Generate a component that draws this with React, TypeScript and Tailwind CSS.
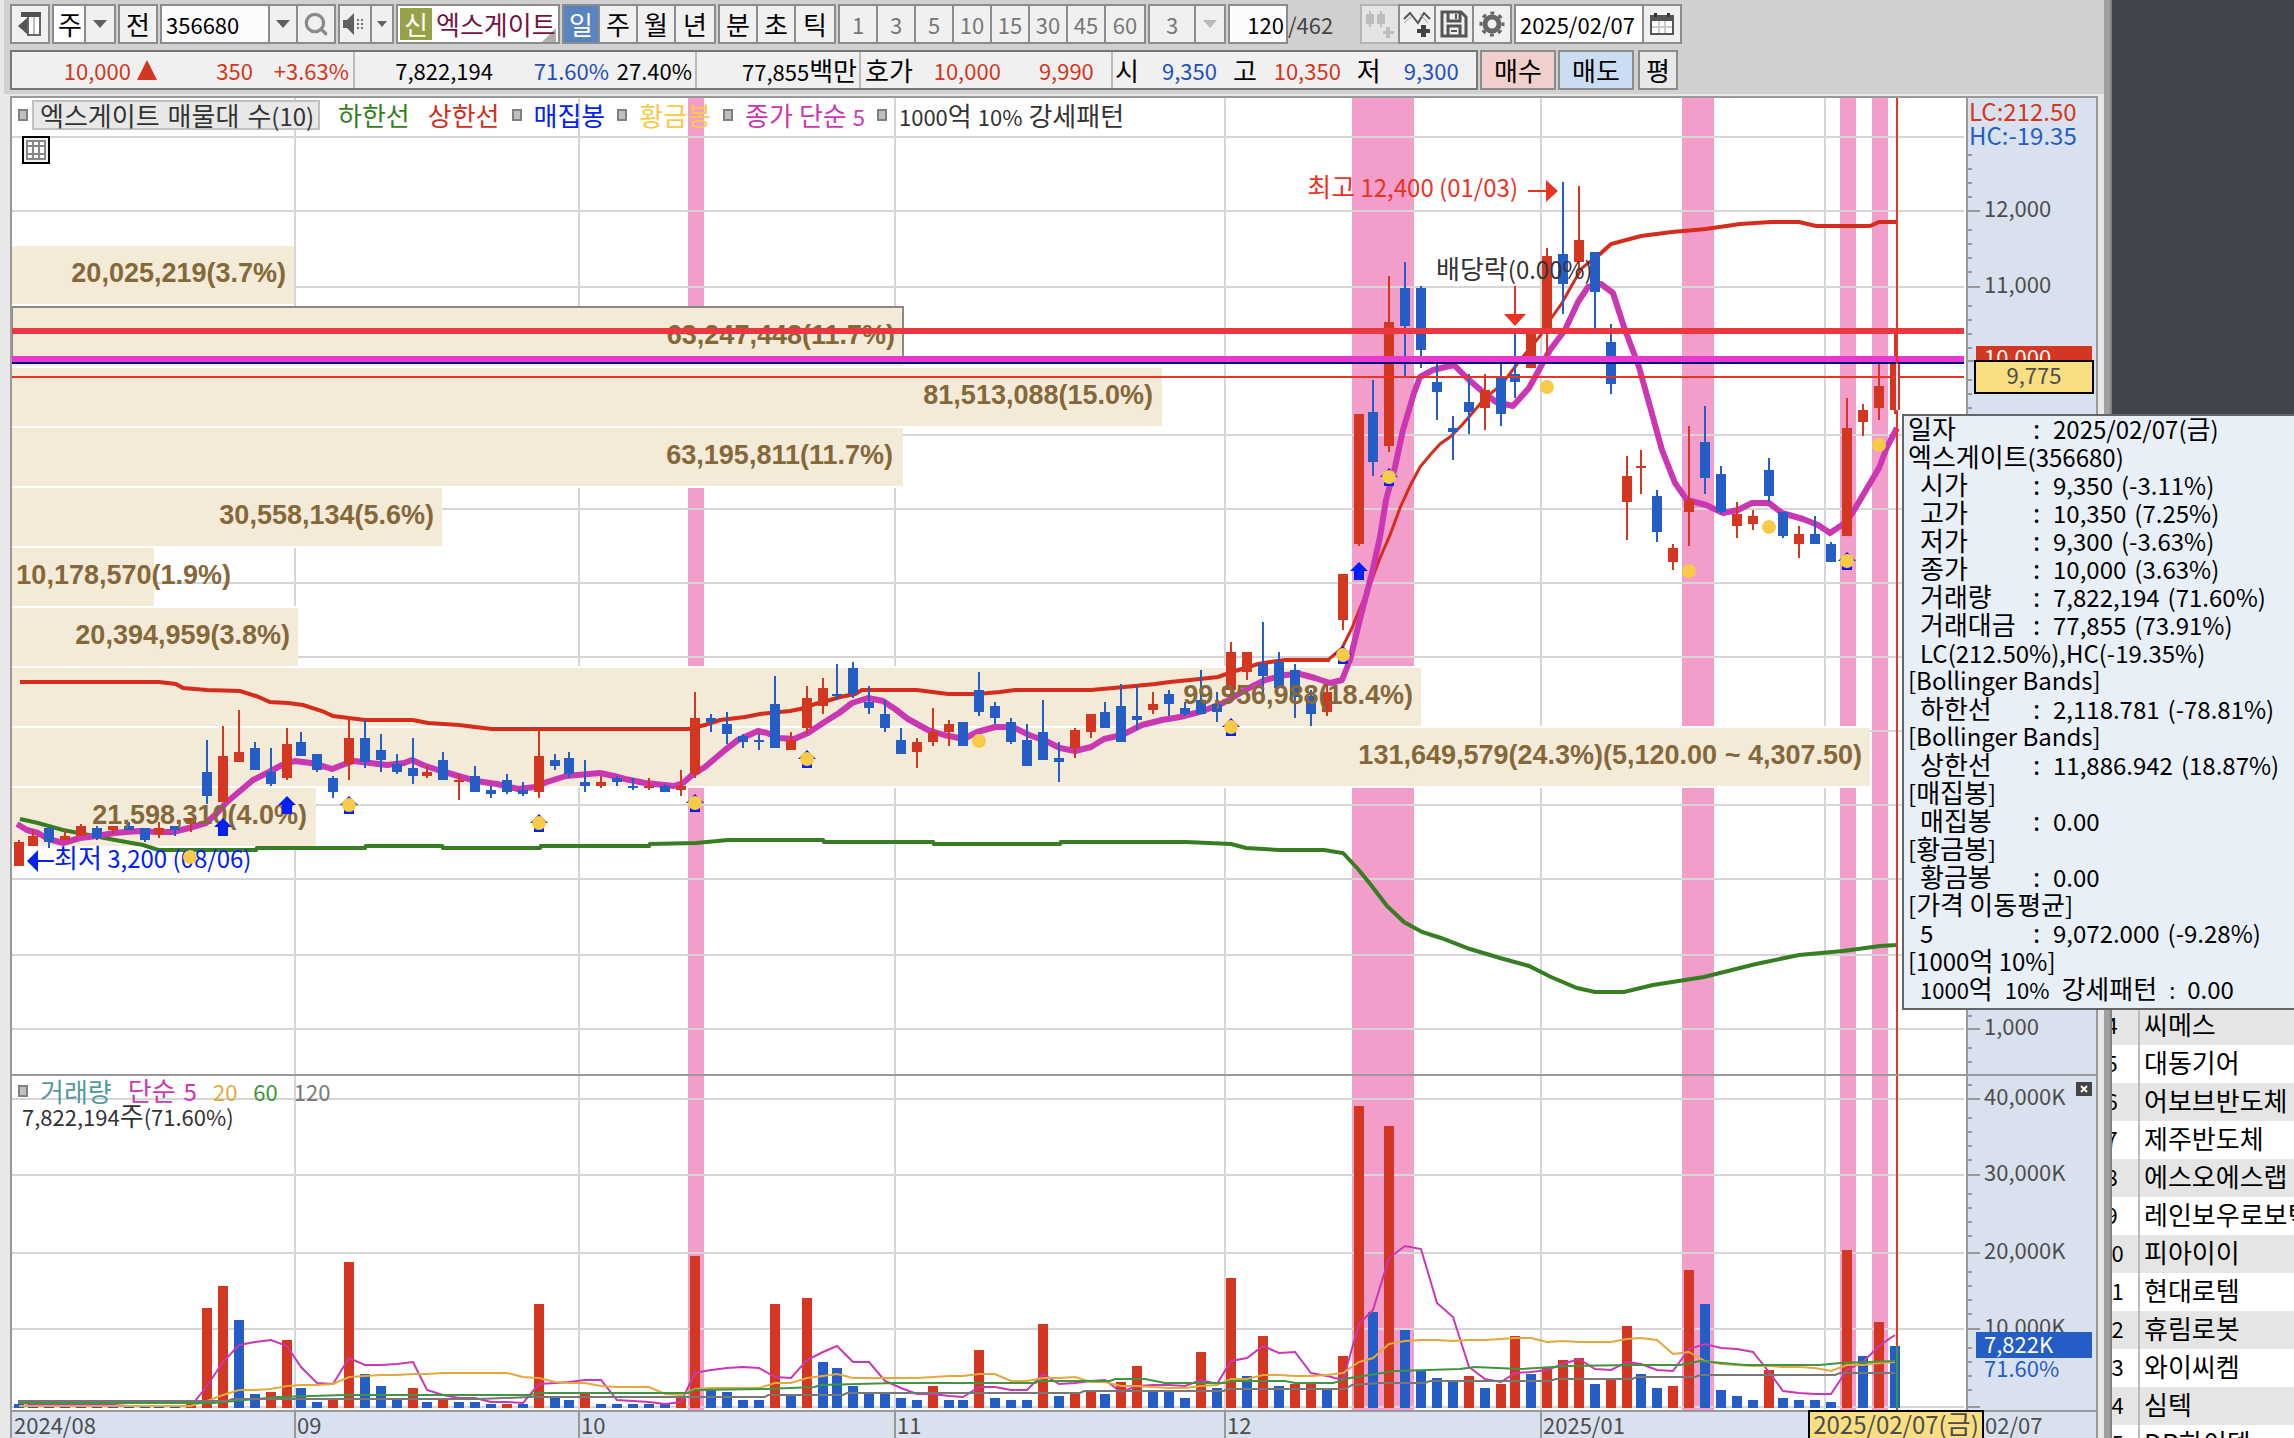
import type { ReactNode } from 'react';
import { Search } from 'lucide-react';

const RED = '#d33621';
const BLUE = '#245dc5';
const PURPLE = '#cb37b3';

// [up, high, bodyTop, bodyBottom, low, volumeUp, volumeTop]
type Bar = [number, number, number, number, number, number, number];

const BARS: Bar[] = [
    [1, 840, 842, 866, 866, 0, 1404], [1, 830, 836, 846, 846, 0, 1404], [0, 828, 828, 842, 848, 0, 1404],
    [1, 830, 836, 840, 840, 0, 1404], [1, 824, 826, 836, 836, 0, 1406], [0, 826, 828, 838, 840, 0, 1406],
    [1, 826, 826, 830, 834, 0, 1406], [0, 822, 826, 830, 830, 0, 1406], [0, 828, 828, 840, 842, 0, 1406],
    [1, 822, 828, 834, 838, 0, 1406], [0, 826, 826, 830, 836, 0, 1406], [1, 818, 818, 824, 832, 1, 1404],
    [0, 740, 772, 796, 804, 1, 1308], [1, 726, 756, 802, 802, 1, 1286], [1, 710, 752, 762, 762, 0, 1320],
    [0, 742, 748, 770, 770, 0, 1394], [0, 748, 772, 784, 786, 1, 1392], [1, 728, 744, 778, 780, 1, 1340],
    [0, 732, 742, 756, 756, 0, 1388], [0, 754, 754, 770, 772, 0, 1402], [0, 776, 778, 792, 798, 1, 1400],
    [1, 718, 738, 764, 780, 1, 1262], [0, 720, 738, 762, 768, 0, 1374], [0, 734, 750, 760, 772, 0, 1386],
    [0, 754, 764, 772, 774, 0, 1400], [0, 738, 768, 776, 784, 1, 1388], [1, 766, 772, 776, 778, 0, 1402],
    [0, 752, 760, 780, 780, 1, 1398], [1, 774, 780, 782, 800, 0, 1402], [0, 766, 776, 792, 792, 0, 1402],
    [0, 786, 790, 794, 798, 0, 1404], [0, 774, 780, 792, 794, 1, 1404], [0, 782, 790, 794, 796, 0, 1404],
    [1, 730, 756, 792, 798, 1, 1304], [0, 754, 760, 766, 770, 0, 1398], [0, 752, 758, 774, 778, 0, 1400],
    [0, 760, 782, 786, 792, 1, 1394], [1, 776, 782, 786, 788, 0, 1404], [0, 776, 778, 782, 786, 0, 1404],
    [0, 778, 786, 788, 790, 0, 1404], [1, 778, 786, 788, 790, 0, 1404], [0, 784, 786, 792, 792, 0, 1404],
    [1, 770, 786, 790, 796, 1, 1396], [1, 692, 718, 774, 778, 1, 1256], [0, 714, 718, 722, 732, 0, 1390],
    [0, 712, 724, 734, 744, 0, 1392], [0, 734, 736, 742, 748, 0, 1400], [0, 734, 740, 742, 750, 0, 1400],
    [0, 676, 704, 748, 748, 1, 1304], [1, 732, 740, 750, 750, 0, 1396], [1, 686, 698, 728, 734, 1, 1298],
    [1, 678, 688, 706, 714, 0, 1362], [0, 664, 694, 696, 700, 0, 1368], [0, 662, 668, 694, 698, 0, 1386],
    [0, 686, 702, 708, 714, 0, 1394], [0, 700, 714, 728, 732, 0, 1394], [0, 728, 740, 754, 754, 0, 1398],
    [1, 738, 742, 752, 768, 0, 1400], [1, 708, 732, 742, 746, 1, 1386], [1, 720, 724, 732, 746, 0, 1400],
    [0, 722, 722, 746, 746, 0, 1400], [0, 672, 690, 712, 716, 1, 1350], [0, 702, 706, 718, 724, 0, 1398],
    [0, 718, 722, 742, 744, 0, 1400], [0, 724, 740, 766, 766, 0, 1400], [0, 700, 732, 760, 760, 1, 1324],
    [0, 742, 758, 762, 782, 0, 1396], [1, 728, 730, 748, 758, 1, 1394], [1, 714, 714, 732, 738, 1, 1392],
    [0, 702, 712, 728, 728, 0, 1394], [0, 684, 706, 742, 742, 1, 1382], [0, 686, 716, 720, 730, 1, 1366],
    [1, 692, 704, 710, 714, 0, 1391], [0, 690, 694, 704, 716, 0, 1391], [0, 702, 708, 714, 716, 0, 1398],
    [0, 670, 700, 714, 714, 1, 1352], [0, 692, 704, 712, 722, 0, 1388], [1, 642, 652, 690, 702, 1, 1278],
    [1, 652, 652, 672, 680, 0, 1376], [0, 622, 664, 676, 694, 1, 1336], [0, 652, 662, 688, 688, 0, 1386],
    [0, 664, 670, 697, 718, 1, 1384], [0, 690, 696, 714, 726, 1, 1384], [1, 684, 692, 712, 716, 0, 1390],
    [1, 574, 574, 620, 630, 1, 1356], [1, 414, 414, 544, 546, 1, 1106], [0, 380, 412, 462, 476, 0, 1312],
    [1, 276, 322, 446, 452, 1, 1126], [0, 262, 288, 326, 377, 0, 1330], [0, 286, 288, 350, 368, 0, 1370],
    [0, 364, 382, 392, 420, 0, 1378], [0, 416, 428, 432, 460, 0, 1382], [0, 374, 402, 412, 434, 1, 1376],
    [1, 374, 390, 408, 430, 0, 1388], [0, 364, 378, 414, 426, 1, 1384], [0, 334, 374, 382, 398, 1, 1336],
    [1, 334, 334, 368, 368, 0, 1374], [1, 248, 256, 328, 356, 1, 1368], [0, 182, 254, 284, 314, 1, 1360],
    [1, 186, 240, 262, 272, 1, 1358], [0, 252, 252, 292, 328, 0, 1384], [0, 324, 342, 384, 394, 1, 1380],
    [1, 456, 476, 502, 540, 1, 1326], [1, 450, 466, 468, 494, 0, 1374], [0, 490, 496, 532, 542, 0, 1388],
    [1, 544, 548, 562, 570, 1, 1386], [1, 426, 500, 512, 546, 1, 1270], [0, 406, 442, 478, 494, 0, 1304],
    [0, 466, 474, 512, 514, 0, 1390], [1, 502, 514, 526, 538, 0, 1396], [1, 510, 516, 524, 530, 0, 1400],
    [0, 458, 470, 496, 502, 1, 1370], [0, 512, 512, 536, 538, 0, 1398], [1, 526, 534, 544, 558, 0, 1400],
    [0, 516, 534, 544, 544, 0, 1400], [0, 542, 544, 562, 562, 0, 1402], [1, 398, 428, 536, 536, 1, 1250],
    [1, 404, 410, 422, 436, 0, 1356], [1, 364, 386, 408, 420, 1, 1322], [1, 330, 363, 410, 414, 0, 1346],
];

const PROFILE = [
    { top: 246, right: 294, text: '20,025,219(3.7%)', end: 286 },
    { top: 308, right: 903, text: '63,247,448(11.7%)', end: 895 },
    { top: 368, right: 1162, text: '81,513,088(15.0%)', end: 1153 },
    { top: 428, right: 903, text: '63,195,811(11.7%)', end: 893 },
    { top: 488, right: 442, text: '30,558,134(5.6%)', end: 434 },
    { top: 548, right: 154, text: '10,178,570(1.9%)', end: 231 },
    { top: 608, right: 298, text: '20,394,959(3.8%)', end: 290 },
    { top: 668, right: 1421, text: '99,956,988(18.4%)', end: 1413 },
    { top: 728, right: 1870, text: '131,649,579(24.3%)(5,120.00 ~ 4,307.50)', end: 1862 },
    { top: 788, right: 316, text: '21,598,310(4.0%)', end: 307 },
];

const ZONES = [[688, 16], [1352, 62], [1682, 32], [1840, 16], [1872, 16]];
const MONTHS = [
    { x: 295, label: '09' },
    { x: 579, label: '10' },
    { x: 895, label: '11' },
    { x: 1225, label: '12' },
    { x: 1541, label: '2025/01' },
    { x: 1825, label: '' },
];
const PRICE_GRID = [137, 211, 287, 361, 435, 509, 583, 657, 731, 805, 879, 955, 1029];
const VOLUME_GRID = [1099, 1175, 1253, 1329, 1407];

const UPPER_LEFT =
    '20,682 159,682 176,684 183,688 207,690 240,691 256,696 270,702 288,703 303,705 322,711 333,716 349,718 365,720 413,720 428,723 459,725 475,727 492,729 688,729 705,725 720,720 745,717 760,714 790,711 805,708 815,704 830,700 840,697 855,694 862,690 917,690 948,694 977,694 1000,692 1015,690 1091,690 1135,686 1155,684 1170,682 1190,680 1218,677 1232,672 1245,668 1258,664 1270,662 1285,660 1330,660';
const UPPER_MID =
    '1328,660 1342,648 1352,628 1360,608 1370,585 1380,558 1390,535 1400,508 1410,486 1420,467 1430,455 1440,444 1450,437 1462,425 1475,410 1485,398 1495,390 1505,380 1518,363 1530,348 1540,336 1550,320 1562,303 1572,285 1582,268 1592,260 1602,253';
const UPPER_RIGHT =
    '1600,254 1611,244 1641,236 1672,232 1706,229 1740,224 1771,222 1799,222 1816,226 1870,226 1879,222 1897,222';
const LOWER =
    '20,819 38,823 63,830 99,837 126,842 143,845 158,850 256,850 257,848 365,848 366,846 442,846 443,848 540,848 541,846 649,846 650,844 696,843 728,840 823,840 824,842 933,842 934,844 1060,844 1061,842 1186,842 1231,844 1246,848 1279,850 1324,850 1343,853 1358,869 1371,885 1387,906 1404,922 1422,932 1441,938 1470,949 1500,958 1529,966 1551,977 1577,988 1595,992 1624,992 1653,985 1704,977 1756,964 1799,955 1843,951 1880,946 1897,945';
const MA5 =
    '17,824 27,830 38,833 48,839 63,843 80,838 97,836 114,833 139,831 156,832 173,832 189,828 206,823 217,813 227,802 240,791 253,780 269,772 282,765 295,761 311,763 326,767 332,769 345,764 354,761 370,763 387,765 404,763 412,760 423,765 438,770 455,775 476,781 497,784 518,789 535,787 547,782 566,776 589,774 600,773 614,776 625,779 645,783 674,786 683,783 692,775 705,767 725,750 738,740 758,731 767,733 779,738 794,739 808,733 823,723 839,713 852,703 868,698 883,701 895,709 908,719 928,730 944,735 964,739 977,732 995,727 1013,727 1029,735 1046,741 1060,748 1075,751 1091,747 1104,739 1122,735 1142,725 1162,720 1180,717 1203,711 1223,703 1232,698 1247,689 1265,680 1285,675 1300,674 1315,678 1330,683 1342,680 1350,660 1361,615 1372,573 1380,537 1386,500 1395,467 1403,430 1414,393 1420,377 1433,370 1454,365 1468,379 1483,392 1496,402 1513,406 1529,388 1540,368 1550,350 1565,330 1578,302 1588,287 1601,284 1613,293 1624,327 1639,367 1649,403 1662,450 1675,483 1687,500 1706,505 1723,513 1738,510 1752,503 1769,503 1782,513 1803,519 1818,525 1830,533 1845,523 1853,512 1866,490 1879,468 1887,447 1897,428';
const VOL_MA60 =
    '18,1403 213,1403 278,1397 345,1395 530,1395 540,1393 688,1393 695,1390 765,1389 815,1387 820,1385 895,1383 1035,1383 1040,1381 1110,1381 1115,1379 1145,1379 1165,1383 1225,1383 1230,1381 1285,1381 1295,1383 1333,1383 1350,1378 1395,1371 1460,1369 1475,1367 1520,1369 1570,1366 1630,1365 1680,1365 1700,1361 1745,1365 1820,1365 1840,1363 1895,1361';
const VOL_MA120 =
    '18,1401 228,1401 232,1399 480,1399 530,1397 765,1397 768,1395 843,1395 847,1393 1080,1393 1084,1391 1224,1391 1228,1389 1345,1389 1352,1385 1380,1383 1425,1383 1430,1381 1550,1381 1556,1379 1632,1379 1637,1377 1695,1377 1700,1375 1835,1375 1840,1373 1895,1373';

const GOLD_WITH_ARROW = [[349, 805], [539, 823], [695, 803], [807, 759], [1231, 727], [1343, 655], [1389, 477], [1847, 561]];
const GOLD_ONLY = [[190, 857], [979, 741], [1547, 387], [1689, 571], [1769, 527], [1879, 445]];
const ARROWS = [[287, 805], [223, 827], [1359, 571]];

const barX = (i: number) => 14 + 2 * Math.floor(i * 7.883);

const movingAverage = (days: number) =>
    BARS.map((_, i) => {
        let sum = 0;
        for (let k = i - days + 1; k <= i; k++) {
            sum += k < 0 ? 1406 : BARS[k][6];
        }
        return `${barX(i) + 5},${Math.round(sum / days)}`;
    }).join(' ');

const STOCKS = [
    ['4', '씨메스'], ['5', '대동기어'], ['6', '어보브반도체'], ['7', '제주반도체'], ['8', '에스오에스랩'],
    ['9', '레인보우로보틱스'], ['10', '피아이이'], ['11', '현대로템'], ['12', '휴림로봇'], ['13', '와이씨켐'],
    ['14', '심텍'], ['15', 'DB하이텍'],
];

const DETAILS: { head?: string; label?: string; value?: string; rate?: string }[] = [
    { label: '시가', value: '9,350', rate: '(-3.11%)' },
    { label: '고가', value: '10,350', rate: '(7.25%)' },
    { label: '저가', value: '9,300', rate: '(-3.63%)' },
    { label: '종가', value: '10,000', rate: '(3.63%)' },
    { label: '거래량', value: '7,822,194', rate: '(71.60%)' },
    { label: '거래대금', value: '77,855', rate: '(73.91%)' },
    { label: 'LC(212.50%),HC(-19.35%)' },
    { head: '[Bollinger Bands]' },
    { label: '하한선', value: '2,118.781', rate: '(-78.81%)' },
    { head: '[Bollinger Bands]' },
    { label: '상한선', value: '11,886.942', rate: '(18.87%)' },
    { head: '[매집봉]' },
    { label: '매집봉', value: '0.00' },
    { head: '[황금봉]' },
    { label: '황금봉', value: '0.00' },
    { head: '[가격 이동평균]' },
    { label: '5', value: '9,072.000', rate: '(-9.28%)' },
    { head: '[1000억 10%]' },
];

// Hangul runs are set larger than the digits and Latin beside them
const splitRuns = (text: string) => text.match(/[가-힣]+|[^가-힣]+/g) ?? [];
const isHangul = (run: string) => /[가-힣]/.test(run);

function Mixed({ text, size = 'text-[22px]' }: { text: string; size?: string }) {
    return (
        <span className={`whitespace-pre ${size}`}>
            {splitRuns(text).map((run, i) => (isHangul(run) ? <span key={i} className="text-[26px]">{run}</span> : run))}
        </span>
    );
}

function SvgMixed({ text, size = 24 }: { text: string; size?: number }) {
    return (
        <>
            {splitRuns(text).map((run, i) => (
                <tspan key={i} fontSize={isHangul(run) ? 26 : size}>
                    {run}
                </tspan>
            ))}
        </>
    );
}

function Group({ children, className = '' }: { children: ReactNode; className?: string }) {
    return (
        <div className={`flex h-10 shrink-0 divide-x-2 divide-[#8c8c8c] border-2 border-[#8c8c8c] bg-[#f0f0f0] ${className}`}>
            {children}
        </div>
    );
}

function ToolButton({ children, label, className = 'w-[38px]' }: { children: ReactNode; label?: string; className?: string }) {
    return (
        <button type="button" aria-label={label} className={`flex shrink-0 items-center justify-center ${className}`}>
            {children}
        </button>
    );
}

function Caret({ color = '#606060' }: { color?: string }) {
    return (
        <svg width="14" height="8" viewBox="0 0 14 8">
            <path d="M0 0H14L7 8Z" fill={color} />
        </svg>
    );
}

function Toolbar() {
    return (
        <div className="flex gap-0.5 whitespace-nowrap leading-9">
            <Group>
                <ToolButton label="패널 접기" className="w-9">
                    <svg width="24" height="26" viewBox="0 0 24 26">
                        <path d="M3 1H23V25H9V20H3Z" fill="#666" />
                        <path d="M3 6H21V23H11V20H3Z" fill="#fff" />
                        <path d="M15 6H17V23H15Z" fill="#bbb" />
                        <path d="M3 1H23V6H3Z" fill="#505050" />
                        <path d="M9 7V23L0 15Z" fill="#555" />
                        <path d="M9 6H11V23H9ZM21 6H23V25H21Z" fill="#666" />
                    </svg>
                </ToolButton>
            </Group>
            <Group className="bg-white">
                <select aria-label="시장" className="w-8 appearance-none bg-white pl-1">
                    <option>주</option>
                </select>
                <ToolButton label="시장 선택" className="w-7 bg-[#f0f0f0]">
                    <Caret />
                </ToolButton>
            </Group>
            <Group>
                <ToolButton className="w-9">전</ToolButton>
            </Group>
            <Group>
                <input aria-label="종목코드" defaultValue="356680" className="w-[108px] bg-[#fcfcff] pl-1 text-[22px]" />
                <ToolButton label="최근 종목" className="w-7">
                    <Caret />
                </ToolButton>
                <ToolButton label="종목 검색" className="w-9">
                    <Search size={26} strokeWidth={3} color="#8a8a8a" />
                </ToolButton>
            </Group>
            <Group>
                <ToolButton label="소리" className="w-8">
                    <svg width="26" height="24" viewBox="0 0 26 24">
                        <path d="M1 8H5L12 1V23L5 16H1Z" fill="#606060" />
                        <path d="M15 7H17V9H15ZM15 11H17V13H15ZM15 15H17V17H15ZM19 7H21V9H19ZM19 11H21V13H19ZM19 15H21V17H19Z" fill="#777" />
                    </svg>
                </ToolButton>
                <ToolButton label="소리 선택" className="w-5">
                    <svg width="10" height="6" viewBox="0 0 10 6">
                        <path d="M0 0H10L5 6Z" fill="#606060" />
                    </svg>
                </ToolButton>
            </Group>
            <div className="relative flex h-10 w-[164px] shrink-0 items-center gap-1 overflow-hidden border-2 border-[#8c8c8c] bg-white pl-0.5">
                <svg width="14" height="14" viewBox="0 0 14 14" className="absolute bottom-0 right-0.5">
                    <path d="M14 0V14H0Z" fill="#b0b0b0" />
                </svg>
                <span className="flex h-8 w-8 shrink-0 items-center justify-center bg-[#99a148] text-white">신</span>
                <span className="relative text-[#76123f]">엑스게이트</span>
            </div>
            <Group>
                <ToolButton className="w-9 bg-[#5a84c0] text-white">일</ToolButton>
                <ToolButton>주</ToolButton>
                <ToolButton>월</ToolButton>
                <ToolButton>년</ToolButton>
            </Group>
            <Group>
                <ToolButton>분</ToolButton>
                <ToolButton>초</ToolButton>
                <ToolButton>틱</ToolButton>
            </Group>
            <Group className="text-[22px] text-[#777]">
                {['1', '3', '5', '10', '15', '30', '45', '60'].map((n) => (
                    <ToolButton key={n}>{n}</ToolButton>
                ))}
            </Group>
            <Group className="text-[22px] text-[#777]">
                <select aria-label="분 간격" disabled className="w-[46px] appearance-none pl-4">
                    <option>3</option>
                </select>
                <ToolButton label="간격 선택" className="w-7">
                    <Caret color="#b8b8b8" />
                </ToolButton>
            </Group>
            <div className="flex shrink-0 items-center text-[22px]">
                <input aria-label="봉 개수" defaultValue="120" className="h-10 w-[60px] border-2 border-[#8c8c8c] bg-[#fcfcff] pr-0.5 text-right" />
                <span className="w-[70px] text-[#444]">/462</span>
            </div>
            <div className="flex shrink-0">
                <button type="button" aria-label="봉 추가" disabled className="flex h-10 w-[38px] items-center justify-center border-2 border-r-0 border-[#b4b4b4] bg-[#e4e4e4]">
                    <svg width="28" height="28" viewBox="0 0 28 28" fill="#bdbdbd">
                        <path d="M3 1H5V4H8V14H5V17H3V14H0V4H3ZM14 1H16V4H19V14H16V17H14V14H11V4H14ZM20 17H24V21H28V24H24V28H20V24H17V21H20Z" />
                    </svg>
                </button>
                <Group>
                    <ToolButton label="지표 추가" className="w-9">
                        <svg width="28" height="28" viewBox="0 0 28 28">
                            <path d="M1 9L7 3L15 13L21 3L27 9" fill="none" stroke="#555" strokeWidth="2" />
                            <path d="M1 13L8 7M17 4L25 13" fill="none" stroke="#999" strokeWidth="1" />
                            <path d="M18 15H23V19H27V23H23V27H18V23H14V19H18Z" fill="#444" />
                        </svg>
                    </ToolButton>
                    <ToolButton label="저장">
                        <svg width="28" height="28" viewBox="0 0 28 28" fill="none" stroke="#555" strokeWidth="3">
                            <path d="M2 2H21L26 7V26H2Z" />
                            <path d="M8 2V11H20V2M8 26V16H20V26" />
                            <path d="M16 4V9M11 21H17" strokeWidth="2" />
                        </svg>
                    </ToolButton>
                    <ToolButton label="설정" className="w-9">
                        <svg width="26" height="26" viewBox="0 0 26 26" fill="none" stroke="#666">
                            <circle cx="13" cy="13" r="7" strokeWidth="5" />
                            <circle cx="13" cy="13" r="11" strokeWidth="3" strokeDasharray="4 4.64" strokeDashoffset="2" />
                        </svg>
                    </ToolButton>
                </Group>
            </div>
            <Group>
                <input aria-label="기준일" defaultValue="2025/02/07" className="w-[128px] bg-white pl-1 text-[22px]" />
                <ToolButton label="달력" className="w-9">
                    <svg width="24" height="22" viewBox="0 0 24 22">
                        <path d="M0 2H24V22H0Z" fill="#555" />
                        <path d="M2 8H22V20H2Z" fill="#fff" />
                        <path d="M8 8H10V20H8ZM14 8H16V20H14ZM2 13H22V15H2Z" fill="#ccc" />
                        <path d="M4 0H7V4H4ZM17 0H20V4H17Z" fill="#333" />
                    </svg>
                </ToolButton>
            </Group>
        </div>
    );
}

function QuoteBar() {
    return (
        <div className="flex gap-0.5 whitespace-nowrap leading-9">
            <div className="flex h-10 shrink-0 divide-x-2 divide-[#bbb] border-2 border-[#777] bg-[#f0f0f0] text-[22px]">
                <div className="flex w-[343px] items-center text-[#d33621]">
                    <span className="w-[119px] text-right">10,000</span>
                    <svg width="20" height="20" viewBox="0 0 20 20" className="ml-1.5">
                        <path d="M10 0L20 20H0Z" fill={RED} />
                    </svg>
                    <span className="w-24 text-right">350</span>
                    <span className="w-24 text-right">+3.63%</span>
                </div>
                <div className="flex w-[342px] items-center">
                    <span className="w-[138px] text-right">7,822,194</span>
                    <span className="w-[116px] text-right text-[#1f4fbd]">71.60%</span>
                    <span className="w-[83px] text-right">27.40%</span>
                </div>
                <div className="flex w-[164px] items-center justify-end pr-0.5">
                    <Mixed text="77,855백만" />
                </div>
                <div className="flex w-[252px] items-center pl-1">
                    <span className="text-[26px]">호가</span>
                    <span className="w-[88px] text-right text-[#d33621]">10,000</span>
                    <span className="w-[93px] text-right text-[#d33621]">9,990</span>
                </div>
                <div className="flex w-[363px] items-center gap-1 pl-0.5">
                    <span className="text-[26px]">시</span>
                    <span className="w-[74px] text-right text-[#1f4fbd]">9,350</span>
                    <span className="ml-3 text-[26px]">고</span>
                    <span className="w-20 text-right text-[#d33621]">10,350</span>
                    <span className="ml-3 text-[26px]">저</span>
                    <span className="w-[74px] text-right text-[#1f4fbd]">9,300</span>
                </div>
            </div>
            <button type="button" className="h-10 w-[76px] shrink-0 border-2 border-[#8c8c8c] bg-[#f0d0cc]">매수</button>
            <button type="button" className="h-10 w-[76px] shrink-0 border-2 border-[#8c8c8c] bg-[#cbddf2]">매도</button>
            <button type="button" className="ml-0.5 h-10 w-10 shrink-0 border-2 border-[#8c8c8c] bg-[#e8e8e8]">평</button>
        </div>
    );
}

function Square() {
    return <span className="h-3 w-2.5 shrink-0 border-2 border-[#808080] bg-[#c0c0c0]" />;
}

function UpArrow({ x, y }: { x: number; y: number }) {
    return <path d={`M${x} ${y - 9}L${x + 9} ${y}H${x + 5}V${y + 9}H${x - 5}V${y}H${x - 9}Z`} fill="#0020f5" />;
}

function Ticks({ grid, min, max }: { grid: number[]; min: number; max: number }) {
    return (
        <g fill="#999">
            {grid.map((y) => (
                <g key={y}>
                    <rect x="1968" y={y - 1} width="12" height="2" />
                    {[19, 33, 47, 61]
                        .filter((d) => y + d > min && y + d < max)
                        .map((d) => (
                            <rect key={d} x="1968" y={y + d - 1} width="4" height="2" />
                        ))}
                </g>
            ))}
        </g>
    );
}

function PriceChart() {
    return (
        <svg viewBox="12 98 2084 976" className="block w-full" fontSize="22">
            <rect x="12" y="98" width="2084" height="976" fill="#fff" />
            {ZONES.map(([x, w]) => (
                <rect key={x} x={x} y="98" width={w} height="976" fill="#f29dca" />
            ))}
            <g fill="#d6d6d6">
                {PRICE_GRID.map((y) => (
                    <rect key={y} x="12" y={y - 1} width="1952" height="2" />
                ))}
                {MONTHS.map((m) => (
                    <rect key={m.x} x={m.x - 1} y="98" width="2" height="976" />
                ))}
            </g>
            {PROFILE.map((p) => (
                <g key={p.top}>
                    <rect x="12" y={p.top - 2} width={p.right - 12} height="62" fill="#fff" />
                    <rect x="12" y={p.top} width={p.right - 12} height="58" fill="#f4ead8" />
                </g>
            ))}
            <rect x="12" y="307" width="891" height="54" fill="none" stroke="#8a8a80" strokeWidth="2" />

            <polyline points={UPPER_LEFT} fill="none" stroke="#d62c1c" strokeWidth="4" />
            <polyline points={UPPER_MID} fill="none" stroke="#d62c1c" strokeWidth="3" />
            <polyline points={UPPER_RIGHT} fill="none" stroke="#d62c1c" strokeWidth="4" />
            <polyline points={LOWER} fill="none" stroke="#377d22" strokeWidth="4" />
            <polyline points={MA5} fill="none" stroke={PURPLE} strokeWidth="6" strokeLinejoin="round" />

            <g shapeRendering="crispEdges">
                {BARS.map(([up, high, top, bottom, low], i) => (
                    <g key={i} fill={up ? RED : BLUE}>
                        <rect x={barX(i) + 4} y={high} width="2" height={low - high} />
                        <rect x={barX(i)} y={top} width="10" height={bottom - top} />
                    </g>
                ))}
            </g>

            <g fill="#85683a" fontWeight="700" fontSize="27" textAnchor="end" className="font-['Liberation_Sans',sans-serif]">
                {PROFILE.map((p) => (
                    <text key={p.top} x={p.end} y={p.top + 36}>
                        {p.text}
                    </text>
                ))}
            </g>

            <text x="54" y="868" fill="#0020f5">
                <SvgMixed text="최저 3,200 (08/06)" />
            </text>
            <path d="M27 861L38 850V860H54V862H38V872Z" fill="#0020f5" />
            <text x="1518" y="197" textAnchor="end" fill="#eb3323">
                <SvgMixed text="최고 12,400 (01/03)" />
            </text>
            <path d="M1558 191L1546 180V190H1528V192H1546V202Z" fill="#eb3323" />
            <text x="1436" y="279" fill="#333">
                <SvgMixed text="배당락(0.00%)" />
            </text>
            <path d="M1514 286H1516V314H1526L1515 326L1504 314H1514Z" fill="#eb3323" />

            {ARROWS.map(([x, y]) => (
                <UpArrow key={x} x={x} y={y} />
            ))}
            {GOLD_WITH_ARROW.map(([x, y]) => (
                <g key={x}>
                    <UpArrow x={x} y={y} />
                    <ellipse cx={x} cy={y} rx="7" ry="7" fill="#f7ca48" />
                </g>
            ))}
            {GOLD_ONLY.map(([x, y]) => (
                <ellipse key={x} cx={x} cy={y} rx="7" ry="7" fill="#f7ca48" />
            ))}

            <rect x="12" y="328" width="1952" height="6" fill="#ec3741" />
            <rect x="12" y="356" width="1952" height="6" fill="#e838d0" />
            <rect x="12" y="362" width="1952" height="2" fill="#000080" />
            <rect x="12" y="376" width="1952" height="2" fill="#e93323" />
            <rect x="1894" y="334" width="2" height="22" fill={RED} />
            <rect x="1896" y="98" width="2" height="976" fill="#e93323" />
            <rect x="1896" y="364" width="2" height="46" fill="#dfe6f4" />

            <rect x="1966" y="98" width="130" height="976" fill="#d8e1ed" />
            <rect x="1966" y="98" width="2" height="976" fill="#999" />
            <Ticks grid={PRICE_GRID.slice(1)} min={212} max={1070} />
            <g fill="#999">
                {[155, 169, 183, 197].map((y) => (
                    <rect key={y} x="1968" y={y - 1} width="4" height="2" />
                ))}
            </g>
            <g fill="#4d4d4d">
                <text x="1984" y="217">12,000</text>
                <text x="1984" y="293">11,000</text>
                <text x="1984" y="1035">1,000</text>
            </g>
            <text x="1969" y="121" fontSize="24" fill={RED}>LC:212.50</text>
            <text x="1969" y="145" fontSize="24" fill={BLUE}>HC:-19.35</text>
            <rect x="1976" y="346" width="116" height="26" fill={RED} />
            <text x="1984" y="366" fill="#fff">10,000</text>
            <rect x="1975" y="361" width="118" height="32" fill="#fade82" stroke="#000" strokeWidth="2" />
            <text x="2034" y="384" fill="#4d4d4d" textAnchor="middle">9,775</text>
        </svg>
    );
}

function VolumeChart() {
    return (
        <svg viewBox="12 1076 2084 362" className="block w-full" fontSize="22">
            <rect x="12" y="1076" width="2084" height="362" fill="#fff" />
            {ZONES.map(([x, w]) => (
                <rect key={x} x={x} y="1076" width={w} height="334" fill="#f29dca" />
            ))}
            <g fill="#d6d6d6">
                {VOLUME_GRID.map((y) => (
                    <rect key={y} x="12" y={y - 1} width="1952" height="2" />
                ))}
                {MONTHS.map((m) => (
                    <rect key={m.x} x={m.x - 1} y="1076" width="2" height="334" />
                ))}
            </g>
            <g shapeRendering="crispEdges">
                {BARS.map((b, i) => (
                    <rect key={i} x={barX(i)} y={b[6]} width="10" height={1408 - b[6]} fill={b[5] ? RED : BLUE} />
                ))}
            </g>
            <g fill="none" strokeWidth="2">
                <polyline points={movingAverage(5)} stroke={PURPLE} />
                <polyline points={movingAverage(20)} stroke="#e3a93c" />
                <polyline points={VOL_MA60} stroke="#419440" />
                <polyline points={VOL_MA120} stroke="#777" />
            </g>
            <rect x="1896" y="1076" width="2" height="334" fill="#e93323" />
            <rect x="1896" y="1346" width="2" height="62" fill="#419440" />

            <rect x="1966" y="1076" width="130" height="334" fill="#d8e1ed" />
            <rect x="12" y="1412" width="2084" height="26" fill="#d8e1ed" />
            <rect x="12" y="1410" width="2084" height="2" fill="#999" />
            <rect x="1966" y="1076" width="2" height="336" fill="#999" />
            <rect x="1968" y="1084" width="4" height="2" fill="#999" />
            <Ticks grid={VOLUME_GRID} min={1080} max={1406} />
            <g fill="#4d4d4d">
                {['40,000K', '30,000K', '20,000K', '10,000K'].map((t, i) => (
                    <text key={t} x="1984" y={VOLUME_GRID[i] + 6}>
                        {t}
                    </text>
                ))}
                <text x="14" y="1434">2024/08</text>
                {MONTHS.map((m) => (
                    <g key={m.x}>
                        <rect x={m.x - 1} y="1412" width="2" height="26" fill="#999" />
                        {m.label && (
                            <text x={m.x + 2} y="1434">
                                {m.label}
                            </text>
                        )}
                    </g>
                ))}
                <text x="1985" y="1434">02/07</text>
            </g>
            <text x="1984" y="1377" fill={BLUE}>71.60%</text>
            <rect x="1976" y="1332" width="116" height="26" fill={BLUE} />
            <text x="1984" y="1353" fill="#fff">7,822K</text>
            <rect x="2076" y="1082" width="16" height="14" fill="#444" />
            <path d="M2081 1086L2087 1092M2087 1086L2081 1092" stroke="#fff" strokeWidth="2" />
            <rect x="1809" y="1411" width="174" height="32" fill="#fade82" stroke="#000" strokeWidth="2" />
            <text x="1896" y="1434" fill="#4d4d4d" textAnchor="middle">
                <SvgMixed text="2025/02/07(금)" />
            </text>
        </svg>
    );
}

function Tooltip() {
    return (
        <div role="tooltip" className="absolute right-0 top-[414px] h-[596px] w-[392px] overflow-hidden border-2 border-r-0 border-[#62666a] bg-[#e8eff7] text-black">
            <div className="-mt-0.5 whitespace-nowrap pl-1 leading-7">
                <div className="flex h-7 items-baseline">
                    <span className="w-[125px] shrink-0">일자</span>
                    <span className="w-5 shrink-0">:</span>
                    <Mixed size="text-[24px]" text="2025/02/07(금)" />
                </div>
                <div className="h-7">
                    <Mixed size="text-[24px]" text="엑스게이트(356680)" />
                </div>
                {DETAILS.map((d, i) => (
                    <div key={i} className="flex h-7 items-baseline">
                        {d.head && <Mixed size="text-[24px]" text={d.head} />}
                        {d.label && (
                            <span className={d.value ? 'w-[125px] shrink-0 pl-3' : 'pl-3'}>
                                <Mixed size="text-[24px]" text={d.label} />
                            </span>
                        )}
                        {d.value && <span className="w-5 shrink-0">:</span>}
                        {d.value && <Mixed size="text-[24px]" text={d.value} />}
                        {d.rate && (
                            <span className="pl-2">
                                <Mixed size="text-[24px]" text={d.rate} />
                            </span>
                        )}
                    </div>
                ))}
                <div className="flex h-7 items-baseline gap-3 pl-3">
                    <Mixed text="1000억" />
                    <Mixed text="10%" />
                    <Mixed text="강세패턴" />
                    <Mixed text=":" />
                    <Mixed size="text-[24px]" text="0.00" />
                </div>
            </div>
        </div>
    );
}

export default function App() {
    return (
        <div className="relative flex h-screen overflow-hidden bg-[#e8e8e8] font-['Noto_Sans_CJK_KR',sans-serif] text-[26px] text-black">
            <main className="min-w-0 flex-1">
                <header className="ml-1 flex h-[94px] flex-col gap-1.5 overflow-hidden bg-[#d0d0d0] pl-1.5 pt-1">
                    <Toolbar />
                    <QuoteBar />
                </header>
                <div className="ml-2.5 mr-1.5 mt-0.5 border-2 border-b-0 border-[#999]">
                    <section className="relative">
                        <PriceChart />
                        <div className="absolute left-1.5 top-0.5 flex items-center gap-3 whitespace-nowrap leading-[26px]">
                            <div className="flex items-center gap-1">
                                <Square />
                                <div className="flex h-[30px] w-[288px] items-center gap-2 border-2 border-[#c0c0c0] bg-[#e8e8e8] pl-1.5 text-[#333]">
                                    <Mixed text="엑스게이트" />
                                    <Mixed text="매물대" />
                                    <Mixed size="text-[24px]" text="수(10)" />
                                </div>
                            </div>
                            <span className="ml-1.5 text-[#377d22]">하한선</span>
                            <span className="ml-1.5 text-[#d62c1c]">상한선</span>
                            <Square />
                            <span className="text-[#0020f5]">매집봉</span>
                            <Square />
                            <span className="text-[#f7ca48]">황금봉</span>
                            <Square />
                            <div className="flex items-baseline gap-1.5 text-[#cb37b3]">
                                <Mixed text="종가" />
                                <Mixed text="단순" />
                                <Mixed text="5" />
                            </div>
                            <Square />
                            <div className="flex items-baseline gap-1.5 text-[#333]">
                                <Mixed text="1000억" />
                                <Mixed text="10%" />
                                <Mixed text="강세패턴" />
                            </div>
                        </div>
                        <button type="button" aria-label="표 보기" className="absolute left-2.5 top-[38px] flex h-7 w-7 items-center justify-center border-2 border-black bg-[#f0f0f0]">
                            <svg width="20" height="20" viewBox="0 0 20 20">
                                <path d="M1 1H19V19H1ZM1 6H19M1 14H19M7 1V19M13 1V19" fill="#fff" stroke="#888" strokeWidth="2" />
                            </svg>
                        </button>
                    </section>
                    <section className="relative border-t-2 border-[#999]">
                        <VolumeChart />
                        <div className="absolute left-1.5 top-0.5 whitespace-nowrap leading-6">
                            <div className="flex items-center gap-4">
                                <div className="flex items-center gap-3">
                                    <Square />
                                    <span className="text-[#549a9c]">거래량</span>
                                </div>
                                <div className="flex items-baseline gap-2 text-[#cb37b3]">
                                    <Mixed text="단순" />
                                    <Mixed size="text-[24px]" text="5" />
                                </div>
                                <span className="text-[22px] text-[#e3a93c]">20</span>
                                <span className="text-[22px] text-[#419440]">60</span>
                                <span className="text-[22px] text-[#777]">120</span>
                            </div>
                            <div className="pl-1 text-[#333]">
                                <Mixed text="7,822,194주(71.60%)" />
                            </div>
                        </div>
                    </section>
                </div>
            </main>
            <div className="w-2 shrink-0 border-r-2 border-[#808080] bg-[#a0a0a0]" />
            <aside className="w-[182px] shrink-0 overflow-hidden">
                <div className="h-[70%] bg-[#42444c]" />
                <table className="-ml-[27px] table-fixed border-collapse whitespace-nowrap">
                    <tbody>
                        {STOCKS.map(([no, name], i) => (
                            <tr key={no} className={i % 2 ? 'h-[38px] bg-white' : 'h-[38px] bg-[#e5e5e5]'}>
                                <td className="h-[38px] min-w-[54px] border-r-2 border-[#bbb] p-0 text-center align-top text-[22px] leading-[34px]">{no}</td>
                                <td className="h-[38px] w-[220px] min-w-[220px] p-0 pl-1 align-top leading-[34px]">{name}</td>
                            </tr>
                        ))}
                    </tbody>
                </table>
            </aside>
            <Tooltip />
        </div>
    );
}
